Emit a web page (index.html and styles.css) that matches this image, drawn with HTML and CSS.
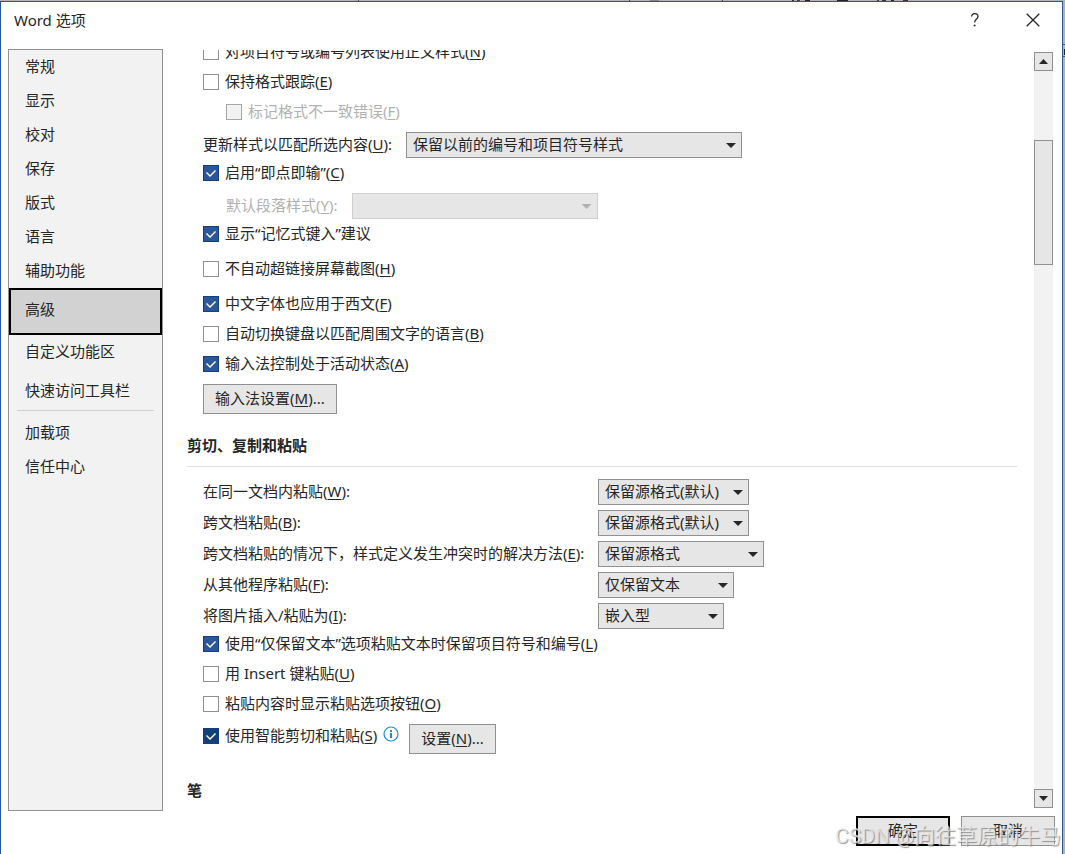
FILE: index.html
```html
<!DOCTYPE html>
<html lang="zh-CN">
<head>
<meta charset="utf-8">
<title>Word 选项</title>
<link rel="stylesheet" href="styles.css">
</head>
<body>
<div class="dialog">
  <header class="titlebar">
    <h1 class="title">Word 选项</h1>
    <button class="title-btn" aria-label="帮助"><svg width="10" height="14" viewBox="0 0 10 14"><path d="M1.6 3.6C1.6 1.7 3 .7 4.7.7S8 1.8 8 3.6C8 6 4.6 6.2 4.6 9.6" fill="none" stroke="#262626" stroke-width="1.3"/><circle cx="4.6" cy="12.6" r="1" fill="#262626"/></svg></button>
    <button class="title-btn" aria-label="关闭"><svg width="14" height="14" viewBox="0 0 14 14"><path d="M.7.7l12.6 12.6M13.3.7L.7 13.3" fill="none" stroke="#262626" stroke-width="1.3"/></svg></button>
  </header>

  <div class="body">
    <nav class="sidebar">
      <button class="nav-item">常规</button>
      <button class="nav-item">显示</button>
      <button class="nav-item">校对</button>
      <button class="nav-item">保存</button>
      <button class="nav-item">版式</button>
      <button class="nav-item">语言</button>
      <button class="nav-item">辅助功能</button>
      <button class="nav-item selected" aria-current="page">高级</button>
      <button class="nav-item">自定义功能区</button>
      <button class="nav-item spaced">快速访问工具栏</button>
      <hr class="nav-rule">
      <button class="nav-item">加载项</button>
      <button class="nav-item">信任中心</button>
    </nav>

    <main class="content">
      <section class="group scrolled">
        <label class="check"><input type="checkbox"><span>对项目符号或编号列表使用正文样式(<u>N</u>)</span></label>
        <label class="check"><input type="checkbox"><span>保持格式跟踪(<u>E</u>)</span></label>
        <label class="check indent disabled"><input type="checkbox" disabled><span>标记格式不一致错误(<u>F</u>)</span></label>
        <div class="field spaced">
          <label for="update">更新样式以匹配所选内容(<u>U</u>):</label>
          <span class="combo combo-xl"><select id="update"><option>保留以前的编号和项目符号样式</option></select></span>
        </div>
        <label class="check"><input type="checkbox" checked><span>启用“即点即输”(<u>C</u>)</span></label>
        <div class="field spaced indent disabled">
          <label for="para">默认段落样式(<u>Y</u>):</label>
          <span class="combo combo-lg"><select id="para" disabled><option></option></select></span>
        </div>
        <label class="check"><input type="checkbox" checked><span>显示“记忆式键入”建议</span></label>
        <label class="check spaced"><input type="checkbox"><span>不自动超链接屏幕截图(<u>H</u>)</span></label>
        <label class="check spaced"><input type="checkbox" checked><span>中文字体也应用于西文(<u>F</u>)</span></label>
        <label class="check"><input type="checkbox"><span>自动切换键盘以匹配周围文字的语言(<u>B</u>)</span></label>
        <label class="check"><input type="checkbox" checked><span>输入法控制处于活动状态(<u>A</u>)</span></label>
        <button class="btn spaced">输入法设置(<u>M</u>)...</button>
      </section>

      <h2 class="heading">剪切、复制和粘贴</h2>
      <section class="group">
        <div class="paste-grid">
          <label for="p1">在同一文档内粘贴(<u>W</u>):</label>
          <span class="combo combo-151"><select id="p1"><option>保留源格式(默认)</option></select></span>
          <label for="p2">跨文档粘贴(<u>B</u>):</label>
          <span class="combo combo-151"><select id="p2"><option>保留源格式(默认)</option></select></span>
          <label for="p3">跨文档粘贴的情况下，样式定义发生冲突时的解决方法(<u>E</u>):</label>
          <span class="combo combo-166"><select id="p3"><option>保留源格式</option></select></span>
          <label for="p4">从其他程序粘贴(<u>F</u>):</label>
          <span class="combo combo-136"><select id="p4"><option>仅保留文本</option></select></span>
          <label for="p5">将图片插入/粘贴为(<u>I</u>):</label>
          <span class="combo combo-126"><select id="p5"><option>嵌入型</option></select></span>
        </div>
        <label class="check"><input type="checkbox" checked><span>使用“仅保留文本”选项粘贴文本时保留项目符号和编号(<u>L</u>)</span></label>
        <label class="check"><input type="checkbox"><span>用 Insert 键粘贴(<u>U</u>)</span></label>
        <label class="check"><input type="checkbox"><span>粘贴内容时显示粘贴选项按钮(<u>O</u>)</span></label>
        <div class="smart spaced">
          <label class="check pressed"><input type="checkbox" checked><span>使用智能剪切和粘贴(<u>S</u>)</span></label>
          <svg class="info" width="16" height="20" viewBox="0 0 16 20"><circle cx="8" cy="10" r="7" fill="none" stroke="#1e8bcd" stroke-width="1.2"/><path d="M7 6h2v2H7zM7 9h2v5H7z" fill="#1e8bcd"/></svg>
          <button class="btn">设置(<u>N</u>)...</button>
        </div>
      </section>
      <h2 class="heading last">笔</h2>
    </main>

    <div class="scrollbar">
      <button class="scroll-btn" aria-label="向上滚动"><svg width="9" height="5" viewBox="0 0 9 5"><path d="M0 5L4.500 0 9 5z" fill="#262626"/></svg></button>
      <div class="track"><div class="thumb"></div></div>
      <button class="scroll-btn" aria-label="向下滚动"><svg width="9" height="5" viewBox="0 0 9 5"><path d="M0 0h9L4.500 5z" fill="#262626"/></svg></button>
    </div>
  </div>

  <footer class="footer">
    <button class="btn action primary">确定</button>
    <button class="btn action">取消</button>
  </footer>
</div>
<div class="watermark">CSDN @向往草原的牛马</div>
</body>
</html>
```

FILE: styles.css
```css
* { box-sizing: border-box; }

body {
  margin: 0;
  height: 100vh;
  overflow: hidden;
  padding: 1px 2px 0 0;
  /* slivers of the document window behind the dialog */
  background:
    linear-gradient(#222, #222) 774px 0 / 11px 1px no-repeat,
    linear-gradient(#222, #222) 837px 0 / 11px 1px no-repeat,
    linear-gradient(90deg, #333 2px, transparent 2px 5px, #444 5px 8px, transparent 8px 13px, #222 13px 18px, transparent 18px) 792px 0 / 20px 1px no-repeat,
    linear-gradient(90deg, #444 2px, transparent 2px 5px, #333 5px 9px, transparent 9px 14px, #222 14px 17px, transparent 17px 26px, #333 26px 31px, transparent 31px) 877px 0 / 34px 1px no-repeat,
    linear-gradient(#555, #555) 722px 0 / 1px 1px no-repeat,
    linear-gradient(#555, #555) 629px 0 / 1px 1px no-repeat,
    linear-gradient(#858585, #858585) 650px 0 / 9px 1px no-repeat,
    linear-gradient(#555, #555) 358px 0 / 1px 1px no-repeat,
    linear-gradient(#222, #222) 100% 49px / 1px 6px no-repeat,
    linear-gradient(#555, #555) 100% 44px / 2px 1px no-repeat,
    linear-gradient(#555, #555) 100% 56px / 2px 1px no-repeat,
    #b2b1b3;
  background-size: 0 0, 11px 1px, 20px 1px, 34px 1px, 1px 1px, 1px 1px, 9px 1px, 1px 1px, 1px 6px, 2px 1px, 2px 1px;
  color: #262626;
  font: 15px/20px "Noto Sans", "Noto Sans CJK SC", sans-serif;
}

button, select, input { font: inherit; color: inherit; margin: 0; }
u { text-underline-offset: 2px; text-decoration-thickness: 1px; }

.dialog {
  display: flex;
  flex-direction: column;
  height: 100%;
  background: #fff;
  border: 1px solid #2b579a;
  border-bottom: 0;
}

/* Title bar */
.titlebar {
  display: flex;
  align-items: center;
  height: 37px;
  margin-bottom: 10px;
  padding: 0 7px 0 13px;
}
.title { flex: 1; margin: 0; padding-bottom: 2px; font-size: 15px; font-weight: 400; }
.title-btn {
  display: flex;
  align-items: center;
  justify-content: center;
  width: 44px;
  height: 36px;
  margin-left: 14px;
  padding: 0 0 1px;
  border: 0;
  background: none;
}

/* Body */
.body { display: flex; flex: 1; min-height: 0; padding: 0 9px 0 7px; }

.sidebar {
  display: flex;
  flex-direction: column;
  flex: none;
  width: 155px;
  border: 1px solid #919191;
  background: #f2f2f2;
}
.nav-item {
  height: 34px;
  padding: 0 16px 2px;
  border: 0;
  background: none;
  text-align: left;
}
.nav-item.selected {
  height: 47px;
  padding: 0 14px 6px;
  border: 2px solid #000;
  background: #d2d2d2;
}
.spaced { margin-top: 5px; }
.nav-rule {
  height: 1px;
  margin: 2px 8px 5px;
  border: 0;
  background: #cfcfcf;
}

.content {
  flex: 1;
  min-width: 0;
  margin: 1px 17px 0 24px;
  overflow: hidden;
}
.group { display: flex; flex-direction: column; align-items: flex-start; padding-left: 16px; white-space: nowrap; }
.scrolled { margin-top: -13px; }

.heading {
  margin: 16px 0 12px;
  padding-bottom: 6px;
  border-bottom: 1px solid #e1e1e1;
  font-size: 15px;
  font-weight: 700;
  line-height: 30px;
}
.heading.last { margin-top: 21px; border: 0; }

/* Check boxes */
.check { display: flex; align-items: center; gap: 6px; height: 30px; }
.check span, .field label, .paste-grid label { padding-bottom: 2px; }
.check input {
  appearance: none;
  width: 16px;
  height: 16px;
  border: 1px solid #919191;
  background: #fff;
}
.check input:checked { border-color: #124078; background: #2b579a; }
.check input:checked::before {
  content: "";
  display: block;
  width: 14px;
  height: 14px;
  background: #fff;
  clip-path: polygon(2px 7px, 3px 6px, 6px 9px, 11px 4px, 12px 5px, 6px 11px);
}
.check input:disabled { background: #f2f2f2; border-color: #a6a6a6; }
.check.indent { margin-left: 23px; }
.field.indent { margin-left: 23px; }
.disabled { color: #b1b1b1; }

/* Drop-downs */
.field { display: flex; align-items: center; gap: 14px; }
.combo { position: relative; display: block; height: 26px; }
.combo select {
  appearance: none;
  display: block;
  width: 100%;
  height: 26px;
  padding: 0 20px 2px 6px;
  border: 1px solid #919191;
  border-radius: 0;
  background: #e6e6e6;
}
.combo::after {
  content: "";
  position: absolute;
  right: 6px;
  top: 11px;
  width: 10px;
  height: 5px;
  background: #262626;
  clip-path: polygon(0 0, 100% 0, 50% 100%);
  pointer-events: none;
}
.disabled .combo select { border-color: #cfcfcf; opacity: 1; }
.disabled .combo::after { background: #b1b1b1; }
.combo-xl { width: 336px; }
.combo-lg { width: 246px; }
.combo-166 { width: 166px; }
.combo-151 { width: 151px; }
.combo-136 { width: 136px; }
.combo-126 { width: 126px; }

.paste-grid { display: grid; grid-template-columns: 395px auto; row-gap: 5px; align-items: center; }

/* Buttons */
.btn {
  height: 30px;
  padding: 0 11px 2px;
  border: 1px solid #919191;
  background: #e6e6e6;
}
.smart { display: flex; align-items: flex-start; }
.smart .check { height: 24px; }
.pressed input:checked { background: #124078; }
.info { margin: 0 10px 0 6px; }

/* Scroll bar */
.scrollbar { display: flex; flex-direction: column; width: 19px; margin: 3px 0; background: #f2f2f2; }
.scroll-btn {
  display: flex;
  align-items: center;
  justify-content: center;
  height: 19px;
  padding: 0;
  border: 1px solid #919191;
  background: #e6e6e6;
}
.track { flex: 1; padding-top: 69px; }
.thumb { height: 125px; border: 1px solid #919191; background: #e6e6e6; }

.footer { display: flex; justify-content: flex-end; gap: 11px; padding: 5px 7px 8px; }
.action { width: 94px; }
.primary { border: 2px solid #000; }

.watermark {
  position: absolute;
  right: 4px;
  bottom: 3px;
  font-family: Roboto, "Noto Sans CJK SC", sans-serif;
  font-size: 21px;
  line-height: 30px;
  color: rgba(240, 240, 240, 0.75);
  text-shadow: 1px 1px 1px rgba(110, 110, 110, 0.7);
  pointer-events: none;
  white-space: nowrap;
}
```
